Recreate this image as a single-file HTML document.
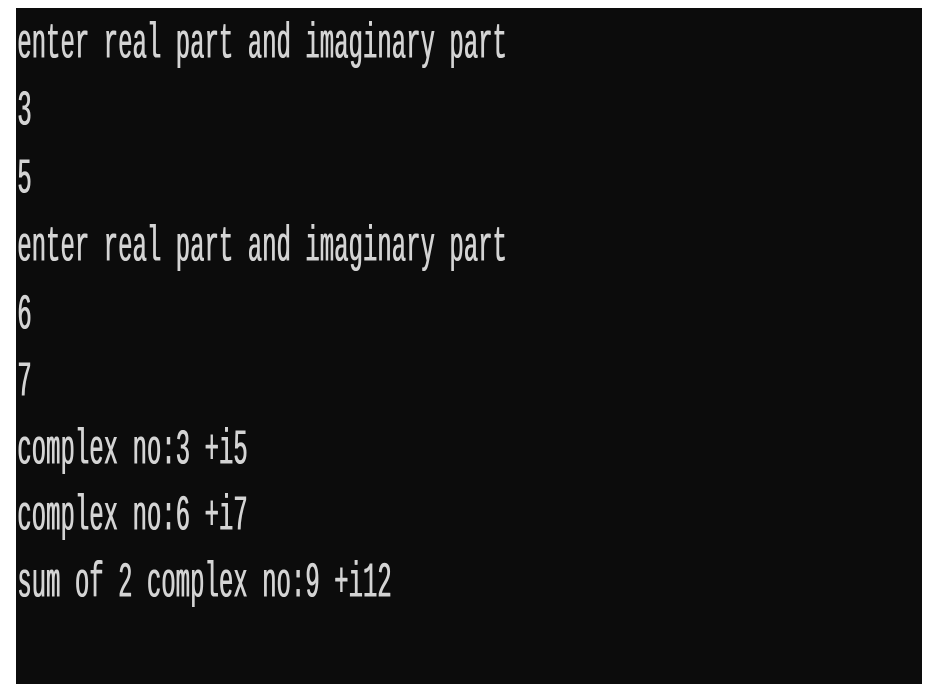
<!DOCTYPE html>
<html><head><meta charset="utf-8"><style>
html,body{margin:0;padding:0;background:#fff;width:933px;height:700px;overflow:hidden}
.term{position:absolute;left:16px;top:8px;width:906px;height:676px;background:#0c0c0c}
.l{position:absolute;left:17px;font-family:"Liberation Mono",monospace;font-size:24px;line-height:24px;color:#d4d4d4;white-space:pre;transform:scaleY(2.1);transform-origin:0 0;text-shadow:0.6px 0 0 #d4d4d4}
</style></head><body>
<div class="term"></div>
<div class="l" style="top:22px">enter real part and imaginary part</div>
<div class="l" style="top:89px">3</div>
<div class="l" style="top:157px">5</div>
<div class="l" style="top:225px">enter real part and imaginary part</div>
<div class="l" style="top:293px">6</div>
<div class="l" style="top:360px">7</div>
<div class="l" style="top:428px">complex no:3 +i5</div>
<div class="l" style="top:494px">complex no:6 +i7</div>
<div class="l" style="top:561px">sum of 2 complex no:9 +i12</div>
</body></html>
